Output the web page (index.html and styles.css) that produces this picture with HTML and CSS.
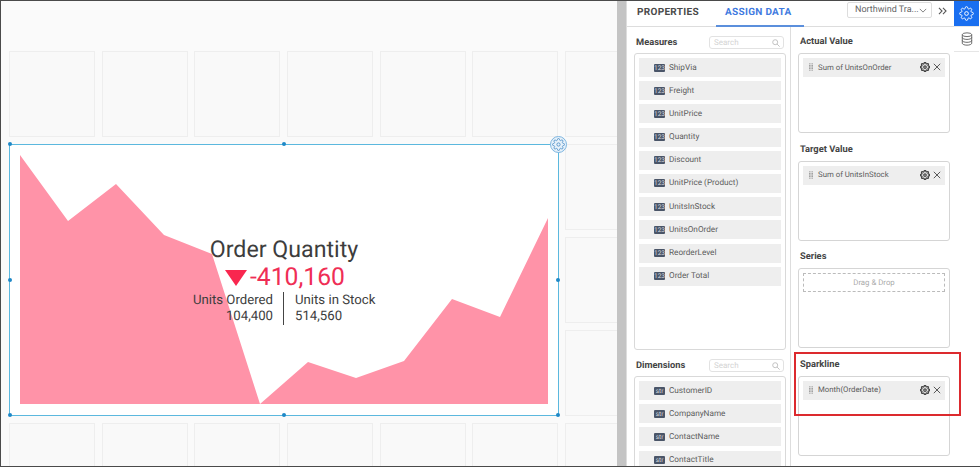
FILE: index.html
```html
<!DOCTYPE html>
<html lang="en">
<head>
<meta charset="utf-8">
<title>Bullet KPI designer</title>
<link rel="stylesheet" href="styles.css">
</head>
<body>
<svg class="defs" width="0" height="0" aria-hidden="true">
  <symbol id="gear" viewBox="0 0 24 24"><circle cx="12" cy="12" r="3"/><path d="M19.4 15a1.65 1.65 0 0 0 .33 1.82l.06.06a2 2 0 0 1 0 2.83 2 2 0 0 1-2.83 0l-.06-.06a1.65 1.65 0 0 0-1.82-.33 1.65 1.65 0 0 0-1 1.51V21a2 2 0 0 1-2 2 2 2 0 0 1-2-2v-.09A1.65 1.65 0 0 0 9 19.4a1.65 1.65 0 0 0-1.82.33l-.06.06a2 2 0 0 1-2.83 0 2 2 0 0 1 0-2.83l.06-.06a1.65 1.65 0 0 0 .33-1.82 1.65 1.65 0 0 0-1.51-1H3a2 2 0 0 1-2-2 2 2 0 0 1 2-2h.09A1.65 1.65 0 0 0 4.6 9a1.65 1.65 0 0 0-.33-1.82l-.06-.06a2 2 0 0 1 0-2.83 2 2 0 0 1 2.83 0l.06.06a1.65 1.65 0 0 0 1.82.33H9a1.65 1.65 0 0 0 1-1.51V3a2 2 0 0 1 2-2 2 2 0 0 1 2 2v.09a1.65 1.65 0 0 0 1 1.51 1.65 1.65 0 0 0 1.82-.33l.06-.06a2 2 0 0 1 2.83 0 2 2 0 0 1 0 2.83l-.06.06a1.65 1.65 0 0 0-.33 1.82V9a1.65 1.65 0 0 0 1.51 1H21a2 2 0 0 1 2 2 2 2 0 0 1-2 2h-.09a1.65 1.65 0 0 0-1.51 1z"/></symbol>
  <symbol id="close" viewBox="0 0 10 10"><path d="M1 1l8 8M9 1l-8 8"/></symbol>
  <symbol id="grip" viewBox="0 0 5 9"><path d="M0 0h2v1H0zM3 0h2v1H3zM0 2h2v1H0zM3 2h2v1H3zM0 4h2v1H0zM3 4h2v1H3zM0 6h2v1H0zM3 6h2v1H3zM0 8h2v1H0zM3 8h2v1H3z"/></symbol>
  <symbol id="lens" viewBox="0 0 9 9"><circle cx="3.6" cy="3.6" r="2.8"/><path d="M5.7 5.7L8.6 8.6"/></symbol>
</svg>
<div class="app">
  <main class="canvas">
    <div class="tiles">
      <i></i><i></i><i></i><i></i><i></i><i></i><i></i>
      <i></i><i></i><i></i><i></i><i></i><i></i><i></i>
      <i></i><i></i><i></i><i></i><i></i><i></i><i></i>
      <i></i><i></i><i></i><i></i><i></i><i></i><i></i>
      <i></i><i></i><i></i><i></i><i></i><i></i><i></i>
    </div>
    <section class="widget">
      <svg class="spark" viewBox="0 0 548 270" aria-hidden="true">
        <polygon points="10,10 58,76 106,39 154,90 202,109 250,259 298,217 346,233 394,216 442,154 490,172 538,73 538,259 10,259"/>
      </svg>
      <div class="kpi">
        <div class="kpi-title">Order Quantity</div>
        <div class="kpi-value"><span class="kpi-arrow"></span>-410,160</div>
        <div class="kpi-split">
          <div class="kpi-left">Units Ordered<br>104,400</div>
          <div class="kpi-right">Units in Stock<br>514,560</div>
        </div>
      </div>
      <b class="handle h-tl"></b><b class="handle h-tc"></b><b class="handle h-tr"></b>
      <b class="handle h-ml"></b><b class="handle h-mr"></b>
      <b class="handle h-bl"></b><b class="handle h-bc"></b><b class="handle h-br"></b>
      <span class="widget-gear"><svg class="ic-gear-blue"><use href="#gear"/></svg></span>
    </section>
  </main>
  <div class="splitter"></div>
  <aside class="panel">
    <header class="tabs">
      <span class="tab">PROPERTIES</span>
      <span class="tab tab-active">ASSIGN DATA</span>
      <span class="source">Northwind Tra...<svg class="chev" viewBox="0 0 10 6"><path d="M1 1l4 4 4-4"/></svg></span>
      <svg class="expand" viewBox="0 0 10 9"><path d="M1 1l3.5 3.5L1 8M5.5 1L9 4.5 5.5 8"/></svg>
    </header>
    <div class="cols">
      <div class="col-left">
        <div class="head"><h3>Measures</h3><span class="search">Search<svg class="lens"><use href="#lens"/></svg></span></div>
        <div class="list list-measures">
          <div class="field"><span class="tag">123</span>ShipVia</div>
          <div class="field"><span class="tag">123</span>Freight</div>
          <div class="field"><span class="tag">123</span>UnitPrice</div>
          <div class="field"><span class="tag">123</span>Quantity</div>
          <div class="field"><span class="tag">123</span>Discount</div>
          <div class="field"><span class="tag">123</span>UnitPrice (Product)</div>
          <div class="field"><span class="tag">123</span>UnitsInStock</div>
          <div class="field"><span class="tag">123</span>UnitsOnOrder</div>
          <div class="field"><span class="tag">123</span>ReorderLevel</div>
          <div class="field"><span class="tag">123</span>Order Total</div>
        </div>
        <div class="head head-dim"><h3>Dimensions</h3><span class="search">Search<svg class="lens"><use href="#lens"/></svg></span></div>
        <div class="list list-dims">
          <div class="field"><span class="tag">str</span>CustomerID</div>
          <div class="field"><span class="tag">str</span>CompanyName</div>
          <div class="field"><span class="tag">str</span>ContactName</div>
          <div class="field"><span class="tag">str</span>ContactTitle</div>
        </div>
      </div>
      <div class="col-right">
        <div class="well-group">
          <h3>Actual Value</h3>
          <div class="well"><div class="pill"><svg class="grip"><use href="#grip"/></svg><span class="pill-name">Sum of UnitsOnOrder</span><svg class="ic-gear"><use href="#gear"/></svg><svg class="ic-close"><use href="#close"/></svg></div></div>
        </div>
        <div class="well-group">
          <h3>Target Value</h3>
          <div class="well"><div class="pill"><svg class="grip"><use href="#grip"/></svg><span class="pill-name">Sum of UnitsInStock</span><svg class="ic-gear"><use href="#gear"/></svg><svg class="ic-close"><use href="#close"/></svg></div></div>
        </div>
        <div class="well-group">
          <h3>Series</h3>
          <div class="well"><div class="drop">Drag &amp; Drop</div></div>
        </div>
        <div class="well-group well-spark">
          <h3>Sparkline</h3>
          <div class="well"><div class="pill"><svg class="grip"><use href="#grip"/></svg><span class="pill-name">Month(OrderDate)</span><svg class="ic-gear"><use href="#gear"/></svg><svg class="ic-close"><use href="#close"/></svg></div></div>
          <div class="highlight"></div>
        </div>
      </div>
    </div>
  </aside>
  <nav class="rail">
    <span class="rail-btn rail-on"><svg class="ic-rail"><use href="#gear"/></svg></span>
    <span class="rail-btn"><svg class="ic-db" viewBox="0 0 14 16"><ellipse cx="7" cy="3" rx="5.5" ry="2.2"/><path d="M1.5 3v10c0 1.2 2.5 2.2 5.500 2.200s5.500-1 5.500-2.200V3M1.500 6.300c0 1.200 2.500 2.200 5.500 2.200s5.500-1 5.500-2.200M1.500 9.700c0 1.200 2.500 2.200 5.500 2.200s5.500-1 5.500-2.200"/></svg></span>
  </nav>
</div>
</body>
</html>
```

FILE: styles.css
```css
* { box-sizing: border-box; }
html, body { margin: 0; height: 100%; overflow: hidden; background: #fff; }
body { font-family: Roboto, "Liberation Sans", sans-serif; color: #444; text-rendering: geometricPrecision; }
.defs { position: absolute; }
h3 { margin: 0; font-size: 9.300px; font-weight: 700; color: #444; line-height: 12px; }

.app {
  display: flex;
  width: 980px;
  height: 467px;
  border-top: 1px solid #4a4a4a;
  border-bottom: 1px solid #4a4a4a;
  border-left: 1px solid #4a4a4a;
}

.canvas { position: relative; width: 616px; background: #fafafa; overflow: hidden; flex: none; }
.tiles {
  display: grid;
  grid-template-columns: repeat(7, 86px);
  grid-auto-rows: 86px;
  column-gap: 6.700px;
  row-gap: 7px;
  padding: 50px 0 0 8px;
}
.tiles i { display: block; background: #f9f9f9; border: 1px solid #eee; }

.widget {
  position: absolute;
  left: 8px;
  top: 143px;
  width: 550px;
  height: 272px;
  background: #fff;
  border: 1px solid #5bb8de;
}
.spark { position: absolute; left: 0; top: 0; width: 548px; height: 270px; }
.spark polygon { fill: #ff93a8; }
.kpi { position: absolute; left: 0; right: 0; top: 90px; text-align: center; color: #3d3d3d; }
.kpi-title { font-size: 23.200px; line-height: 28px; }
.kpi-value { font-size: 24.700px; line-height: 28px; color: #ef2e55; display: flex; justify-content: center; align-items: center; gap: 3px; padding-left: 2px; margin-top: 1px; }
.kpi-arrow { width: 0; height: 0; border-left: 11px solid transparent; border-right: 11px solid transparent; border-top: 16px solid #f9274f; }
.kpi-split { display: flex; justify-content: center; font-size: 13.200px; line-height: 16px; }
.kpi-left { width: 274px; height: 33px; text-align: right; padding: 1px 10px 0 0; border-right: 1px solid #444; }
.kpi-right { width: 274px; height: 33px; text-align: left; padding: 1px 0 0 11px; }

.handle { position: absolute; width: 4px; height: 4px; border-radius: 50%; background: #1e88c7; }
.h-tl { left: -2px; top: -3px; }
.h-tc { left: 272px; top: -3px; }
.h-tr { left: 546px; top: -3px; }
.h-ml { left: -2px; top: 133px; }
.h-mr { left: 546px; top: 133px; }
.h-bl { left: -2px; top: 268px; }
.h-bc { left: 272px; top: 268px; }
.h-br { left: 546px; top: 268px; }
.widget-gear {
  position: absolute; left: 540px; top: -9px; width: 17px; height: 17px;
  border-radius: 50%; background: #e8f2fa; border: 1px solid #7db5e0;
  display: flex; align-items: center; justify-content: center;
}
.ic-gear-blue { width: 13px; height: 13px; fill: none; stroke: #4d8fc9; stroke-width: 1.600; }

.splitter { width: 10px; flex: none; background: #c4c4c4; border-right: 1px solid #ddd; }

.panel { width: 327px; flex: none; display: flex; flex-direction: column; background: #fff; }
.tabs { height: 26px; flex: none; display: flex; align-items: stretch; border-bottom: 1px solid #ddd; position: relative; }
.tab { font-size: 10px; font-weight: 700; letter-spacing: .3px; line-height: 24px; color: #4a4a4a; }
.tab:first-child { width: 89px; padding-left: 10px; }
.tab-active { color: #3f7ae0; border-bottom: 2px solid #5b8fdc; height: 26px; padding-left: 9px; width: 88px; white-space: nowrap; }
.source {
  margin: 1px 0 8px 43px; width: 85px; height: 16px; border: 1px solid #ddd; border-radius: 2px;
  font-size: 9px; line-height: 14px; color: #666; padding: 0 5px 0 7px; display: flex; align-items: center; justify-content: space-between; white-space: nowrap;
}
.chev { width: 8px; height: 5px; fill: none; stroke: #666; stroke-width: 1; flex: none; }
.expand { width: 9px; height: 8px; margin: 6px 0 0 6px; fill: none; stroke: #555; stroke-width: 1.200; flex: none; }

.cols { flex: 1; display: flex; min-height: 0; }
.col-left { width: 164px; flex: none; border-right: 1px solid #ddd; padding: 9px 5px 0 7px; overflow: hidden; }
.head { display: flex; justify-content: space-between; align-items: center; height: 13px; padding: 0 1px 0 2px; }
.head h3 { padding-bottom: 1px; line-height: 11px; }
.head-dim { margin-top: 9px; }
.search {
  width: 75px; height: 13px; border: 1px solid #e2e2e2; border-radius: 3px; font-size: 8px; line-height: 11px; color: #d4d4d4;
  padding: 0 3px 0 4px; display: flex; justify-content: space-between; align-items: center;
}
.lens { width: 8px; height: 8px; fill: none; stroke: #bbb; stroke-width: 1; }
.list { border: 1px solid #d9d9d9; border-radius: 3px; margin-top: 4px; padding: 4px 4px 0; width: 152px; }
.list-measures { height: 297px; }
.list-dims { height: 110px; }
.field {
  display: flex; align-items: center; height: 19px; margin-bottom: 4.200px; padding-left: 15px; background: #eeeeee;
  font-size: 8.200px; color: #5c5c5c;
}
.tag {
  width: 11px; height: 8px; background: #4a5568; color: #d5d9df; font-size: 6.500px; line-height: 8px; text-align: center; border-radius: 1px; margin-right: 4px; flex: none;
}

.col-right { flex: 1; padding: 9px 4px 0 7px; }
.well-group { position: relative; height: 107.500px; }
.well-group h3 { height: 17px; line-height: 12px; padding-left: 2px; }
.well { height: 80px; border: 1px solid #d5d5d5; border-radius: 3px; padding: 4px 4px 0; width: 152px; }
.pill { display: flex; align-items: center; height: 19px; background: #eeeeee; padding: 0 4px 1px 6px; font-size: 7.800px; color: #5c5c5c; }
.grip { width: 4px; height: 8px; fill: #888; margin-right: 5px; flex: none; }
.pill-name { flex: 1; }
.ic-gear { width: 10px; height: 10px; fill: none; stroke: #444; stroke-width: 3; margin-right: 3px; }
.ic-close { width: 8px; height: 8px; fill: none; stroke: #444; stroke-width: 1.100; }
.drop { height: 19px; border: 1px dashed #bbb; text-align: center; font-size: 7.800px; line-height: 17px; color: #aaa; }
.highlight { position: absolute; left: -4px; top: -7px; width: 167px; height: 64px; border: 2px solid #dc2a2e; }

.rail { width: 25px; flex: none; display: flex; flex-direction: column; background: #fff; }
.rail-btn { height: 25px; display: flex; align-items: center; justify-content: center; border-bottom: 1px solid #e6e6e6; }
.rail-on { background: #1a6ff0; height: 26px; }
.ic-rail { width: 15px; height: 15px; fill: none; stroke: #fff; stroke-width: 1.500; }
.ic-db { width: 12px; height: 14px; fill: none; stroke: #555; stroke-width: 1; }
```
